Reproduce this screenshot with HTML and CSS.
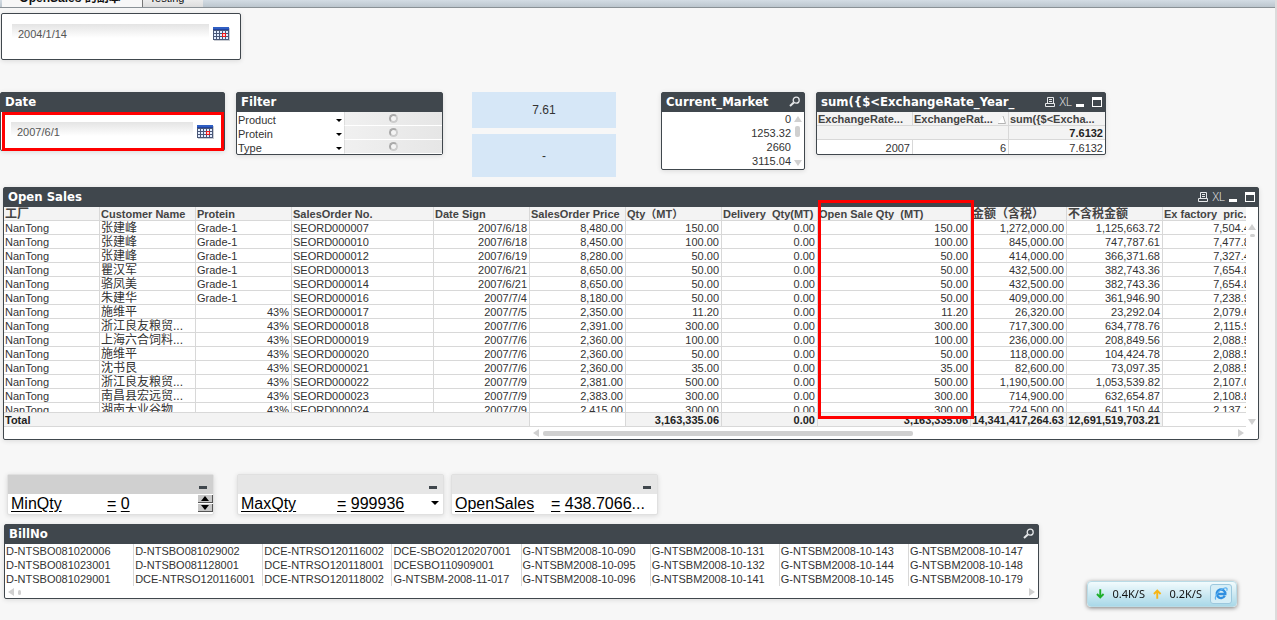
FILE: index.html
```html
<!DOCTYPE html>
<html lang="zh-CN">
<head>
<meta charset="utf-8">
<title>OpenSales</title>
<link rel="stylesheet" href="styles.css">
</head>
<body>
<svg class="sprite" aria-hidden="true">
  <symbol id="calendar" viewBox="0 0 17 14">
    <rect x="1" y="1" width="16" height="13" fill="#c9ccd2"/>
    <rect width="16" height="13" fill="#4a5878"/>
    <rect width="16" height="3" fill="#2f5fc4"/>
    <rect y="2" width="16" height="1" fill="#2343a0"/>
    <path d="M1 4h2v2H1zM4 4h2v2H4zM7 4h2v2H7zM10 4h2v2h-2zM13 4h2v2h-2zM1 7h2v2H1zM4 7h2v2H4zM7 7h2v2H7zM13 7h2v2h-2zM1 10h2v2H1zM4 10h2v2H4zM7 10h2v2H7zM10 10h2v2h-2zM13 10h2v2h-2z" fill="#e4eeff"/>
    <rect x="9.5" y="6.5" width="3" height="3" fill="#ffd0d0" stroke="#f01818"/>
  </symbol>
  <symbol id="search" viewBox="0 0 12 12">
    <circle cx="7.2" cy="4.2" r="3" fill="none" stroke="#e6e8ea" stroke-width="1.3"/>
    <path d="M4.8 6.4L1 10" fill="none" stroke="#e6e8ea" stroke-width="2"/>
  </symbol>
  <symbol id="print" viewBox="0 0 10 10">
    <path d="M2.5 6.5v-6h6v6M4 2.5h3M4 4.5h3M.5 6.5h9v3h-9z" fill="none" stroke="#e6e8ea"/>
  </symbol>
  <symbol id="min" viewBox="0 0 8 10"><rect y="7" width="8" height="3" fill="currentColor"/></symbol>
  <symbol id="max" viewBox="0 0 10 10"><path d="M0 0h10v10H0zM1 3v6h8V3z" fill="#fff" fill-rule="evenodd"/></symbol>
</svg>

<nav class="tabs">
  <a class="tab tab-active" href="#">OpenSales 的副本</a>
  <a class="tab" href="#">Testing</a>
</nav>

<main class="sheet">
  <section class="panel today">
    <div class="date-body">
      <input class="date-input" type="text" value="2004/1/14" aria-label="Current date">
      <button class="icon-btn" aria-label="Pick current date"><svg class="cal"><use href="#calendar"/></svg></button>
    </div>
  </section>

  <div class="widgets">
    <section class="panel date">
      <h2 class="caption">Date</h2>
      <div class="date-body">
        <input class="date-input" type="text" value="2007/6/1" aria-label="Date">
        <button class="icon-btn" aria-label="Pick date"><svg class="cal"><use href="#calendar"/></svg></button>
      </div>
      <div class="mark date-mark"></div>
    </section>

    <section class="panel filter">
      <h2 class="caption">Filter</h2>
      <div class="filter-row"><button class="filter-name">Product<i class="caret"></i></button><span class="led-cell"><i class="led"></i></span></div>
      <div class="filter-row"><button class="filter-name">Protein<i class="caret"></i></button><span class="led-cell"><i class="led"></i></span></div>
      <div class="filter-row"><button class="filter-name">Type<i class="caret"></i></button><span class="led-cell"><i class="led"></i></span></div>
    </section>

    <div class="kpis">
      <div class="kpi">7.61</div>
      <div class="kpi kpi-tall">-</div>
    </div>

    <section class="panel market">
      <h2 class="caption">Current_Market<button class="icon-btn push" aria-label="Search market"><svg class="i12"><use href="#search"/></svg></button></h2>
      <div class="market-body">
        <ul class="market-list"><li>0</li><li>1253.32</li><li>2660</li><li>3115.04</li></ul>
        <div class="vbar"><i class="up"></i><i class="vthumb"></i><i class="down"></i></div>
      </div>
    </section>

    <section class="panel rate">
      <h2 class="caption">sum({$&lt;ExchangeRate_Year_
        <span class="tools push">
          <button class="icon-btn" aria-label="Print rates"><svg class="i10"><use href="#print"/></svg></button>
          <button class="icon-btn xl">XL</button>
          <button class="icon-btn" aria-label="Minimize rates"><svg class="i8"><use href="#min"/></svg></button>
          <button class="icon-btn maxi" aria-label="Maximize rates"><svg class="i10"><use href="#max"/></svg></button>
        </span>
      </h2>
      <table class="grid">
        <thead><tr><th>ExchangeRate...</th><th><span class="sorted">ExchangeRat...<svg class="sort" viewBox="0 0 8 8"><path d="M0 7.500L5 0l2.500 7.500z" fill="#fff"/><path d="M0 7.500h7.500L5 0" fill="none" stroke="#b4b4b4"/></svg></span></th><th>sum({$&lt;Excha...</th></tr></thead>
        <tbody>
          <tr class="sum"><td colspan="2"></td><td>7.6132</td></tr>
          <tr><td class="n">2007</td><td class="n">6</td><td class="n">7.6132</td></tr>
        </tbody>
      </table>
    </section>
  </div>

  <section class="panel sales">
    <h2 class="caption">Open Sales
      <span class="tools push">
        <button class="icon-btn" aria-label="Print sales"><svg class="i10"><use href="#print"/></svg></button>
        <button class="icon-btn xl">XL</button>
        <button class="icon-btn" aria-label="Minimize sales"><svg class="i8"><use href="#min"/></svg></button>
        <button class="icon-btn maxi" aria-label="Maximize sales"><svg class="i10"><use href="#max"/></svg></button>
      </span>
    </h2>
    <div class="sales-body">
      <div class="sales-view">
        <table class="grid sales-grid">
          <colgroup><col class="c"><col class="c"><col class="c"><col class="c-order"><col class="c"><col class="c"><col class="c"><col class="c"><col class="c-open"><col class="c"><col class="c"><col class="c"></colgroup>
          <thead><tr><th class="cjk">工厂</th><th>Customer Name</th><th>Protein</th><th>SalesOrder No.</th><th>Date Sign</th><th>SalesOrder Price</th><th>Qty（MT）</th><th>Delivery&nbsp; Qty(MT)</th><th>Open Sale Qty&nbsp; (MT)</th><th class="cjk">金额（含税）</th><th class="cjk">不含税金额</th><th>Ex factory&nbsp; pric...</th></tr></thead>
          <tbody>
            <tr><td>NanTong</td><td class="cjk">张建峰</td><td>Grade-1</td><td>SEORD000007</td><td class="n">2007/6/18</td><td class="n">8,480.00</td><td class="n">150.00</td><td class="n">0.00</td><td class="n">150.00</td><td class="n">1,272,000.00</td><td class="n">1,125,663.72</td><td class="n">7,504.42</td></tr>
            <tr><td>NanTong</td><td class="cjk">张建峰</td><td>Grade-1</td><td>SEORD000010</td><td class="n">2007/6/18</td><td class="n">8,450.00</td><td class="n">100.00</td><td class="n">0.00</td><td class="n">100.00</td><td class="n">845,000.00</td><td class="n">747,787.61</td><td class="n">7,477.88</td></tr>
            <tr><td>NanTong</td><td class="cjk">张建峰</td><td>Grade-1</td><td>SEORD000012</td><td class="n">2007/6/19</td><td class="n">8,280.00</td><td class="n">50.00</td><td class="n">0.00</td><td class="n">50.00</td><td class="n">414,000.00</td><td class="n">366,371.68</td><td class="n">7,327.43</td></tr>
            <tr><td>NanTong</td><td class="cjk">瞿汉军</td><td>Grade-1</td><td>SEORD000013</td><td class="n">2007/6/21</td><td class="n">8,650.00</td><td class="n">50.00</td><td class="n">0.00</td><td class="n">50.00</td><td class="n">432,500.00</td><td class="n">382,743.36</td><td class="n">7,654.87</td></tr>
            <tr><td>NanTong</td><td class="cjk">骆凤美</td><td>Grade-1</td><td>SEORD000014</td><td class="n">2007/6/21</td><td class="n">8,650.00</td><td class="n">50.00</td><td class="n">0.00</td><td class="n">50.00</td><td class="n">432,500.00</td><td class="n">382,743.36</td><td class="n">7,654.87</td></tr>
            <tr><td>NanTong</td><td class="cjk">朱建华</td><td>Grade-1</td><td>SEORD000016</td><td class="n">2007/7/4</td><td class="n">8,180.00</td><td class="n">50.00</td><td class="n">0.00</td><td class="n">50.00</td><td class="n">409,000.00</td><td class="n">361,946.90</td><td class="n">7,238.94</td></tr>
            <tr><td>NanTong</td><td class="cjk">施维平</td><td class="n">43%</td><td>SEORD000017</td><td class="n">2007/7/5</td><td class="n">2,350.00</td><td class="n">11.20</td><td class="n">0.00</td><td class="n">11.20</td><td class="n">26,320.00</td><td class="n">23,292.04</td><td class="n">2,079.65</td></tr>
            <tr><td>NanTong</td><td class="cjk">浙江良友粮贸...</td><td class="n">43%</td><td>SEORD000018</td><td class="n">2007/7/6</td><td class="n">2,391.00</td><td class="n">300.00</td><td class="n">0.00</td><td class="n">300.00</td><td class="n">717,300.00</td><td class="n">634,778.76</td><td class="n">2,115.93</td></tr>
            <tr><td>NanTong</td><td class="cjk">上海六合饲料...</td><td class="n">43%</td><td>SEORD000019</td><td class="n">2007/7/6</td><td class="n">2,360.00</td><td class="n">100.00</td><td class="n">0.00</td><td class="n">100.00</td><td class="n">236,000.00</td><td class="n">208,849.56</td><td class="n">2,088.50</td></tr>
            <tr><td>NanTong</td><td class="cjk">施维平</td><td class="n">43%</td><td>SEORD000020</td><td class="n">2007/7/6</td><td class="n">2,360.00</td><td class="n">50.00</td><td class="n">0.00</td><td class="n">50.00</td><td class="n">118,000.00</td><td class="n">104,424.78</td><td class="n">2,088.50</td></tr>
            <tr><td>NanTong</td><td class="cjk">沈书艮</td><td class="n">43%</td><td>SEORD000021</td><td class="n">2007/7/6</td><td class="n">2,360.00</td><td class="n">35.00</td><td class="n">0.00</td><td class="n">35.00</td><td class="n">82,600.00</td><td class="n">73,097.35</td><td class="n">2,088.50</td></tr>
            <tr><td>NanTong</td><td class="cjk">浙江良友粮贸...</td><td class="n">43%</td><td>SEORD000022</td><td class="n">2007/7/9</td><td class="n">2,381.00</td><td class="n">500.00</td><td class="n">0.00</td><td class="n">500.00</td><td class="n">1,190,500.00</td><td class="n">1,053,539.82</td><td class="n">2,107.08</td></tr>
            <tr><td>NanTong</td><td class="cjk">南昌县宏远贸...</td><td class="n">43%</td><td>SEORD000023</td><td class="n">2007/7/9</td><td class="n">2,383.00</td><td class="n">300.00</td><td class="n">0.00</td><td class="n">300.00</td><td class="n">714,900.00</td><td class="n">632,654.87</td><td class="n">2,108.85</td></tr>
            <tr><td>NanTong</td><td class="cjk">湖南大业谷物...</td><td class="n">43%</td><td>SEORD000024</td><td class="n">2007/7/9</td><td class="n">2,415.00</td><td class="n">300.00</td><td class="n">0.00</td><td class="n">300.00</td><td class="n">724,500.00</td><td class="n">641,150.44</td><td class="n">2,137.17</td></tr>
          </tbody>
          <tfoot><tr class="sum"><td class="total" colspan="5">Total</td><td class="blank"></td><td>3,163,335.06</td><td>0.00</td><td>3,163,335.06</td><td>14,341,417,264.63</td><td>12,691,519,703.21</td><td class="blank"></td></tr></tfoot>
        </table>
      </div>
      <div class="vbar sales-vbar"><i class="up"></i><i class="vthumb dot"></i><i class="down"></i></div>
    </div>
    <div class="hbar sales-hbar"><i class="left"></i><i class="hthumb"></i><i class="right"></i></div>
    <div class="mark sales-mark"></div>
  </section>

  <div class="vars">
    <section class="var var-dark">
      <div class="var-cap"><button class="icon-btn" aria-label="Minimize MinQty"><svg class="i8"><use href="#min"/></svg></button></div>
      <div class="var-body"><span class="var-name"><u>MinQty</u></span><u>=</u>&nbsp;<u>0</u>
        <span class="stepper push"><button class="step" aria-label="Increase"><i class="step-up"></i></button><button class="step" aria-label="Decrease"><i class="step-down"></i></button></span></div>
    </section>
    <section class="var var-second">
      <div class="var-cap"><button class="icon-btn" aria-label="Minimize MaxQty"><svg class="i8"><use href="#min"/></svg></button></div>
      <div class="var-body"><span class="var-name"><u>MaxQty</u></span><u>=</u>&nbsp;<u>999936</u><button class="icon-btn push drop" aria-label="Choose MaxQty"><i class="caret caret-big"></i></button></div>
    </section>
    <section class="var">
      <div class="var-cap"><button class="icon-btn" aria-label="Minimize OpenSales"><svg class="i8"><use href="#min"/></svg></button></div>
      <div class="var-body"><span class="var-name"><u>OpenSales</u></span><u>=</u>&nbsp;<u>438.7066</u>...</div>
    </section>
  </div>

  <section class="panel bill">
    <h2 class="caption">BillNo<button class="icon-btn push" aria-label="Search BillNo"><svg class="i12"><use href="#search"/></svg></button></h2>
    <ul class="bill-list">
      <li>D-NTSBO081020006</li><li>D-NTSBO081023001</li><li>D-NTSBO081029001</li>
      <li>D-NTSBO081029002</li><li>D-NTSBO081128001</li><li>DCE-NTRSO120116001</li>
      <li>DCE-NTRSO120116002</li><li>DCE-NTRSO120118001</li><li>DCE-NTRSO120118002</li>
      <li>DCE-SBO20120207001</li><li>DCESBO110909001</li><li>G-NTSBM-2008-11-017</li>
      <li>G-NTSBM2008-10-090</li><li>G-NTSBM2008-10-095</li><li>G-NTSBM2008-10-096</li>
      <li>G-NTSBM2008-10-131</li><li>G-NTSBM2008-10-132</li><li>G-NTSBM2008-10-141</li>
      <li>G-NTSBM2008-10-143</li><li>G-NTSBM2008-10-144</li><li>G-NTSBM2008-10-145</li>
      <li>G-NTSBM2008-10-147</li><li>G-NTSBM2008-10-148</li><li>G-NTSBM2008-10-179</li>
    </ul>
    <div class="hbar"><i class="left"></i><i class="hthumb dot"></i><i class="right"></i></div>
  </section>
</main>

<aside class="net">
  <svg class="arrow" viewBox="0 0 9 10"><path d="M4.500 0v8M1 5l3.500 3.500L8 5" fill="none" stroke="#1fae2a" stroke-width="2"/></svg>
  <span class="speed">0.4K/S</span>
  <svg class="arrow" viewBox="0 0 9 10"><path d="M4.500 10V2M1 5l3.500-3.500L8 5" fill="none" stroke="#f7b515" stroke-width="2"/></svg>
  <span class="speed">0.2K/S</span>
  <button class="ie" aria-label="Browser">
    <svg class="ie-icon" viewBox="0 0 14 14"><path d="M10.800 8.800A4.300 4.300 0 1 1 11.300 7H4" fill="none" stroke="#2f8fe0" stroke-width="2.400"/><path d="M2 12.500C-.5 11 4.500 3 10 1.200c3.200-1 3.500.8 2.700 2.500" fill="none" stroke="#5cb2f2" stroke-width="1.200"/></svg>
  </button>
</aside>
</body>
</html>
```

FILE: styles.css
```css
* { box-sizing: border-box; }

body {
  margin: 0;
  min-height: 100vh;
  background: #f7f7f7;
  border-right: 2px solid #dcdcdc;
  color: #333;
  font: 11px/14px "Liberation Sans", "Noto Sans CJK SC", sans-serif;
  overflow: hidden;
}

ul { margin: 0; padding: 0; list-style: none; }
button { font: inherit; color: inherit; margin: 0; padding: 0; border: 0; background: none; }
svg { display: block; }
.sprite { display: none; }

/* sheet tabs */
.tabs {
  display: flex;
  align-items: flex-end;
  height: 8px;
  padding-left: 2px;
  overflow: hidden;
  background: linear-gradient(#d3dce4, #bcc6ce);
  border-bottom: 1px solid #8a9196;
}
.tab {
  width: 61px;
  padding: 0 12px 2px 0;
  background: linear-gradient(#fff, #ddd);
  border-left: 1px solid #777;
  color: #111;
  text-align: center;
  text-decoration: none;
}
.tab-active {
  width: 140px;
  padding: 0 4px 2px 0;
  background: #f7f7f7;
  border: 0;
  font-weight: bold;
  font-size: 12px;
}

.sheet { padding: 5px 0 0; }

/* panels */
.panel {
  position: relative;
  background: #fff;
  border: 1px solid #40474d;
  border-radius: 2px;
  box-shadow: 0 1px 5px rgba(0, 0, 0, .12);
}
.caption {
  display: flex;
  align-items: center;
  height: 19px;
  margin: 0;
  padding: 0 3px 2px 4px;
  background: #40474d;
  color: #fff;
  font: bold 13px/17px "DejaVu Sans Condensed", "DejaVu Sans", sans-serif;
  white-space: nowrap;
}
.push { margin-left: auto; }
.tools { display: flex; align-items: center; gap: 4px; }
.maxi { margin-left: 4px; }
.xl { font: 300 12px/12px "Open Sans", sans-serif; color: #eee; }
.i8 { width: 8px; height: 10px; }
.i10 { width: 10px; height: 10px; }
.i12 { width: 12px; height: 12px; }
.cal { width: 17px; height: 14px; }

.mark { position: absolute; border: 3px solid #f00; pointer-events: none; }

/* date boxes */
.today { width: 240px; height: 47px; margin-left: 1px; }
.date-body { display: flex; align-items: center; gap: 4px; padding: 10px 10px 8px; }
.date-input {
  flex: 1;
  min-width: 0;
  height: 20px;
  padding: 0 6px;
  border: 0;
  background: linear-gradient(#e4e4e4, #fff 14px);
  color: #555;
  font: inherit;
}
.date { width: 225px; }
.date-mark { inset: 19px 0 -1px 1px; }

/* widget row */
.widgets { display: flex; align-items: flex-start; margin-top: 32px; height: 85px; }
.filter { width: 207px; margin-left: 11px; }
.kpis { width: 144px; margin-left: 29px; }
.market { width: 144px; margin-left: 45px; }
.rate { width: 290px; margin-left: 11px; }

.filter-row { display: flex; height: 14px; }
.filter-name {
  display: flex;
  align-items: center;
  justify-content: space-between;
  width: 107px;
  padding: 2px 2px 0 1px;
}
.caret {
  border: 3px solid transparent;
  border-top-color: #000;
  border-bottom: 0;
}
.caret-big { display: block; border-width: 4px 4px 0; }
.led-cell {
  flex: 1;
  display: flex;
  align-items: center;
  justify-content: center;
  border-left: 1px solid #ddd;
  border-bottom: 1px solid #fff;
  background: linear-gradient(90deg, #f0f0f0, #e6e6e6);
}
.led {
  width: 9px;
  height: 9px;
  border: 2px solid #aaa;
  border-right-color: #ccc;
  border-bottom-color: #ccc;
  border-radius: 50%;
  background: #f4f4f4;
}

.kpi {
  display: flex;
  align-items: center;
  justify-content: center;
  height: 36px;
  margin-bottom: 6px;
  background: #d6e7f7;
  font-size: 12px;
}
.kpi-tall { height: 43px; }

.market-body { display: flex; height: 57px; }
.market-list { flex: 1; text-align: right; }
.vbar {
  display: flex;
  flex-direction: column;
  align-items: center;
  gap: 4px;
  width: 13px;
  padding: 4px 0 3px;
}
.up, .down { border: 3px solid transparent; border-width: 0 4px 6px; border-bottom-color: #d0d0d0; }
.down { border-width: 6px 4px 0; border-top-color: #d0d0d0; margin-top: auto; }
.vthumb { width: 5px; height: 11px; border-radius: 2px; background: #d0d0d0; }
.dot { width: 5px; height: 3px; }

/* tables */
.grid {
  width: 100%;
  table-layout: fixed;
  border-collapse: separate;
  border-spacing: 0;
}
.grid th, .grid td {
  height: 14px;
  padding: 2px 2px 0 1px;
  overflow: hidden;
  border-right: 1px solid #d8d8d8;
  border-bottom: 1px solid #d8d8d8;
  line-height: 11px;
  text-align: left;
  white-space: nowrap;
}
.grid th { background: #f3f3f3; color: #444; }
.rate th:last-child, .rate td:last-child { border-right: 0; }
.rate tbody tr:last-child td { border-bottom: 0; }
.grid .n { text-align: right; }
.grid .cjk { font-size: 12px; }
.grid .sum td { background: #f3f3f3; color: #222; font-weight: bold; text-align: right; }
.grid .sum .total { text-align: left; }
.grid .sum .blank { background: #fff; }
.sorted { display: flex; align-items: center; justify-content: space-between; }
.sort { width: 8px; height: 8px; }

/* open sales */
.sales { margin: 10px 16px 0 3px; }
.sales-body { display: flex; height: 220px; }
.sales-view { flex: 1; min-width: 0; overflow: hidden; }
.sales-grid { width: 1255px; }
.sales-grid tfoot td { position: sticky; bottom: 0; border-top: 1px solid #d8d8d8; }
.c { width: 96px; }
.c-order { width: 142px; }
.c-open { width: 153px; }
.sales-vbar { width: 12px; padding: 17px 0 2px; }
.hbar { display: flex; align-items: center; gap: 4px; height: 12px; padding: 0 3px; }
.left, .right { border: 4px solid transparent; border-width: 4px 6px 4px 0; border-right-color: #d0d0d0; }
.right { border-width: 4px 0 4px 6px; border-left-color: #d0d0d0; margin-left: auto; }
.hthumb { width: 370px; height: 5px; border-radius: 2px; background: #d0d0d0; }
.hbar .dot { width: 3px; height: 5px; }
.sales-hbar { padding: 0 14px 0 529px; }
.sales-mark { top: 12px; left: 814px; width: 156px; height: 219px; }

/* variables */
.vars { display: flex; margin: 34px 0 0 7px; }
.var {
  width: 207px;
  height: 41px;
  background: #fff;
  border: 1px solid #e0e0e0;
  border-radius: 2px;
  box-shadow: 0 1px 5px rgba(0, 0, 0, .12);
}
.var-second { margin: 0 7px 0 23px; }
.var-cap {
  display: flex;
  align-items: center;
  justify-content: flex-end;
  height: 19px;
  padding: 0 6px 2px 0;
  background: #e6e6e6;
  color: #40474d;
}
.var-dark .var-cap { background: #d0d0d0; }
.var-body {
  display: flex;
  height: 20px;
  padding-left: 3px;
  color: #000;
  font-size: 16px;
  line-height: 20px;
}
.var-name { width: 96px; }
.var u { text-underline-offset: 2px; }
.drop { padding: 0 4px 3px 0; }
.stepper { display: flex; flex-direction: column; gap: 1px; padding: 1px 0; }
.step {
  display: flex;
  align-items: center;
  justify-content: center;
  width: 15px;
  height: 8px;
  background: #c8c8c8;
  border-right: 1px solid #555;
  border-bottom: 1px solid #555;
}
.step-up, .step-down { border: 4px solid transparent; border-width: 0 4px 5px; border-bottom-color: #000; }
.step-down { border-width: 5px 4px 0; border-top-color: #000; }

/* bill numbers */
.bill { width: 1035px; margin: 9px 0 0 4px; }
.bill-list {
  display: grid;
  grid-template-rows: repeat(3, 14px);
  grid-auto-flow: column;
  grid-auto-columns: 1fr;
}
.bill-list li { padding-left: 1px; line-height: 15px; border-right: 1px solid #d8d8d8; }
.bill-list li:nth-last-child(-n+3) { border-right: 0; }

/* network meter floating over the sheet */
.net {
  position: fixed;
  right: 40px;
  bottom: 13px;
  display: flex;
  align-items: center;
  gap: 8px;
  width: 150px;
  height: 26px;
  padding: 0 4px 0 8px;
  border: 1px solid #b9dbe6;
  border-radius: 4px;
  background: linear-gradient(#f2fbfd, #a9d8e8);
  box-shadow: 0 1px 4px rgba(0, 0, 0, .5);
  color: #111;
  font: 11px/14px "Noto Sans", sans-serif;
}
.arrow { width: 9px; height: 10px; }
.speed { width: 33px; }
.ie {
  display: flex;
  align-items: center;
  justify-content: center;
  width: 22px;
  height: 20px;
  flex: none;
  border: 1px solid #9cc8de;
  border-radius: 3px;
  background: #d6eef6;
}
.ie-icon { width: 14px; height: 14px; }
```
